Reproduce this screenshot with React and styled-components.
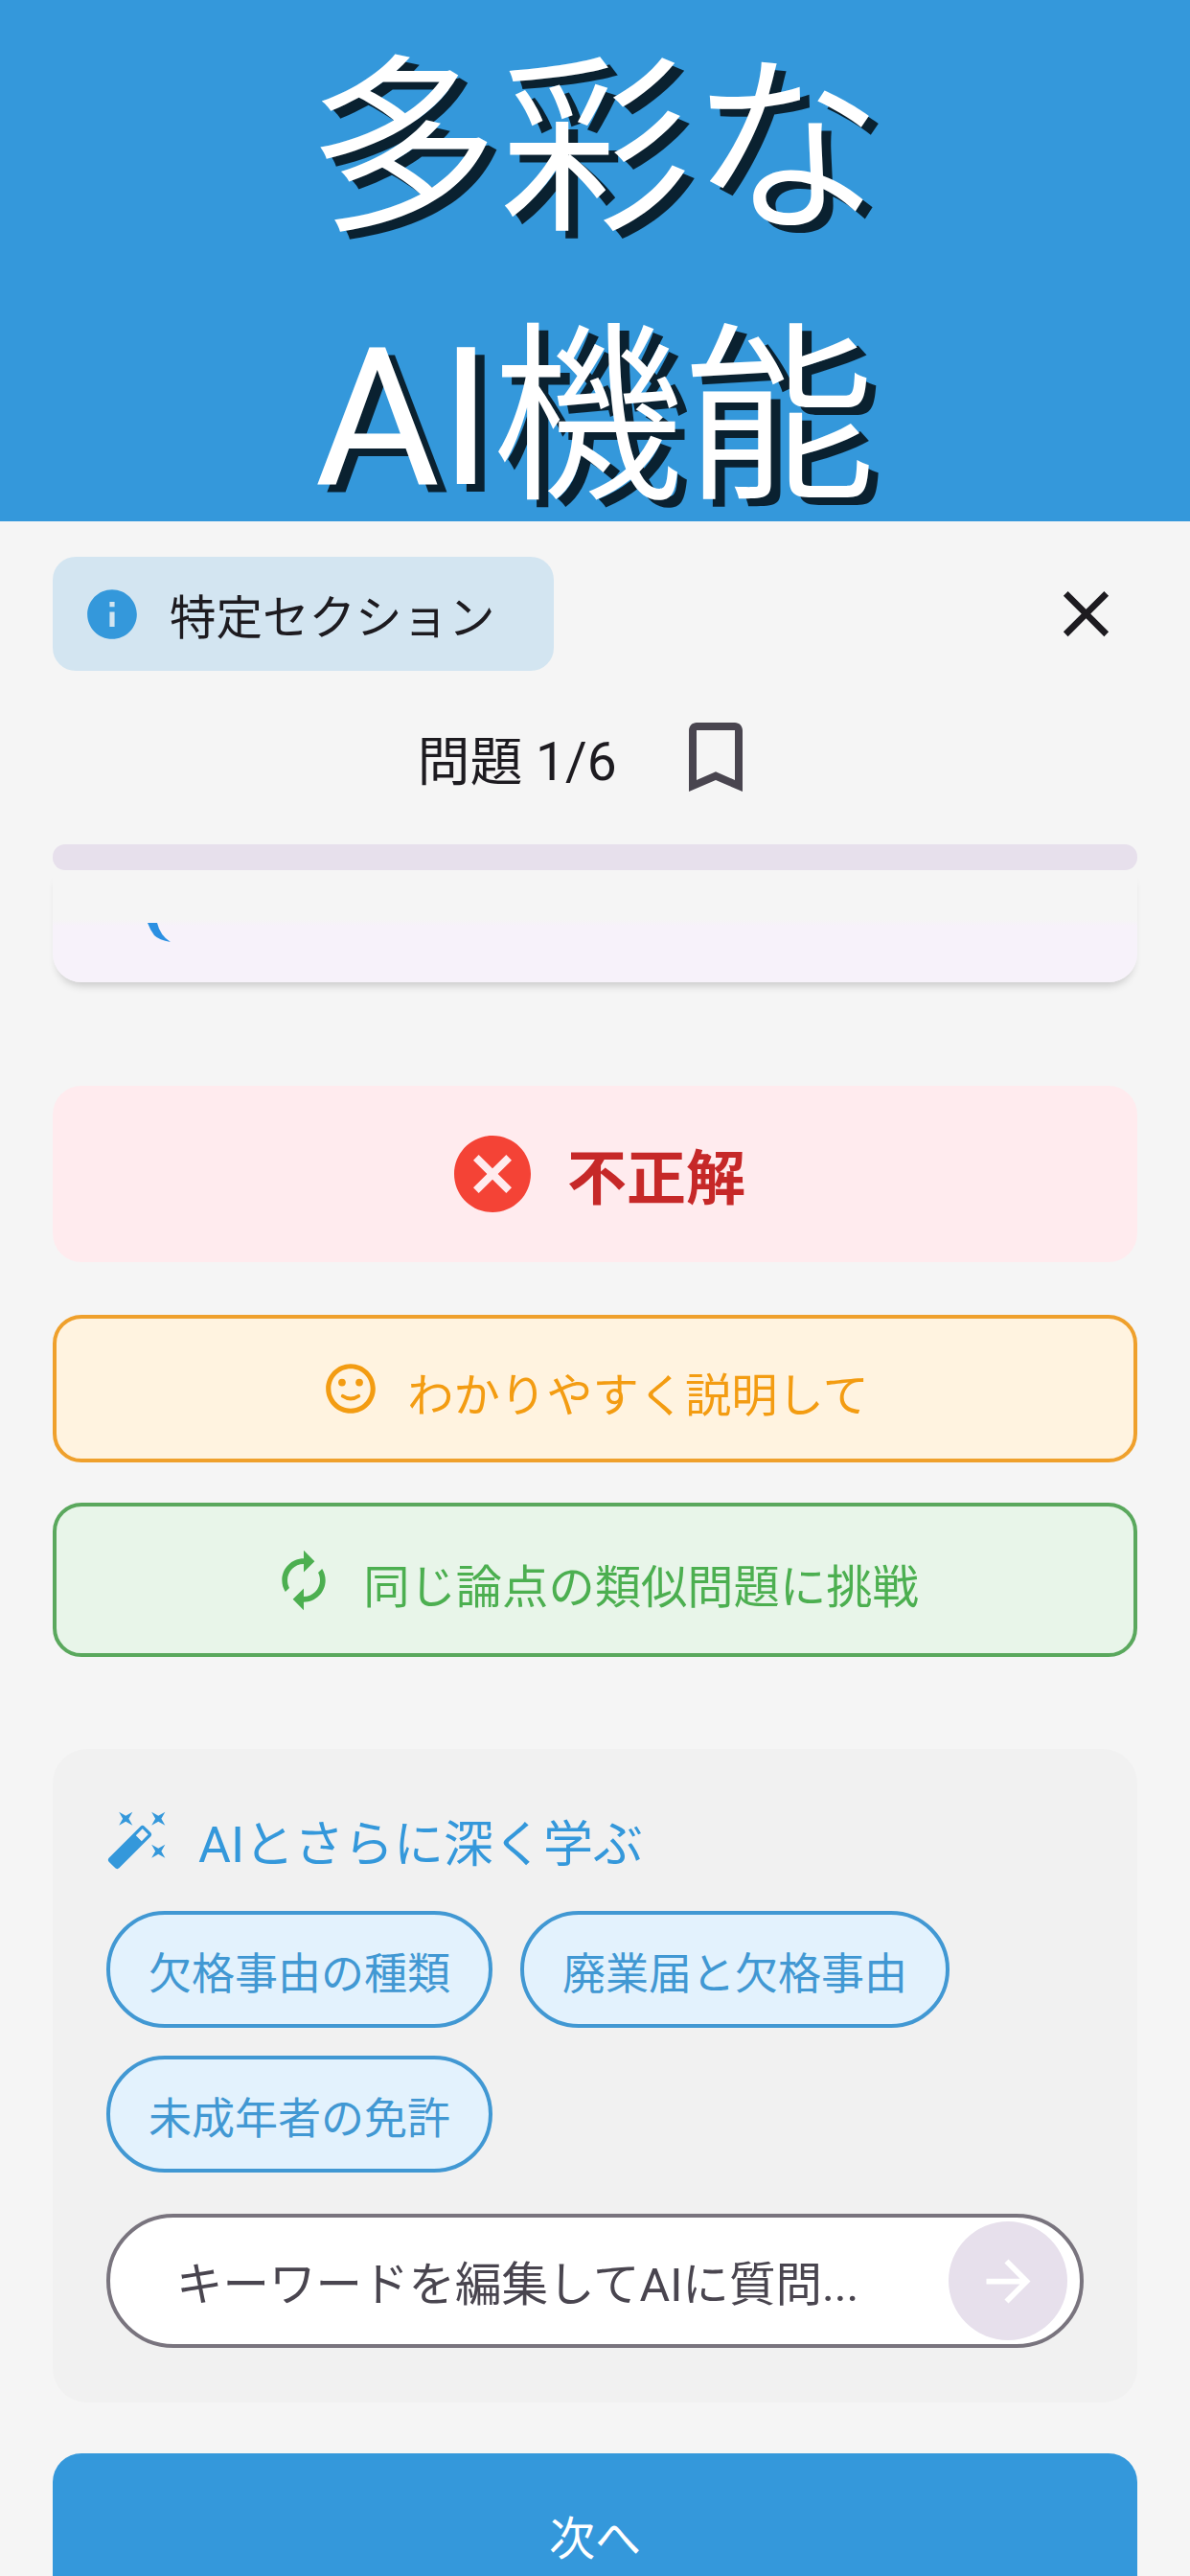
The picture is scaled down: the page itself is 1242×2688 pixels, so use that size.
import React from "react";
import styled, { createGlobalStyle } from "styled-components";

const GlobalStyle = createGlobalStyle`
  html, body {
    margin: 0;
    padding: 0;
    height: 2688px;
    overflow: hidden;
    background: #f5f5f5;
    font-family: Roboto, "Noto Sans CJK JP", sans-serif;
  }
`;

const Page = styled.div`
  width: 1242px;
  height: 2688px;
  overflow: hidden;
  background: #f5f5f5;
`;

const Hero = styled.header`
  display: flex;
  flex-direction: column;
  gap: 80px;
  height: 544px;
  box-sizing: border-box;
  padding-top: 57px;
  background: #3498db;
  color: #fff;
  font-size: 200px;
  font-weight: 350;
  line-height: 200px;
  text-align: center;
  text-shadow: 10px 8px 0 #0a2130;
`;

const HeroLatin = styled.span`
  font-weight: 400;
`;

const Content = styled.main`
  padding: 37px 55px 0;
`;

const TopRow = styled.div`
  display: flex;
  align-items: center;
  justify-content: space-between;
`;

const SectionChip = styled.div`
  display: flex;
  align-items: center;
  gap: 29px;
  width: 523px;
  height: 119px;
  box-sizing: border-box;
  padding-left: 31px;
  border-radius: 24px;
  background: #d3e5f1;
  color: #1d1b20;
  font-size: 48.5px;
`;

const CloseIcon = styled.svg`
  width: 81px;
  height: 81px;
  margin-right: 13px;
  fill: #1d1b20;
`;

const QuestionRow = styled.div`
  display: flex;
  align-items: center;
  justify-content: center;
  gap: 55px;
  height: 96px;
  margin-top: 42px;
  padding-right: 12px;
  color: #1d1b20;
  font-size: 55px;
`;

const BookmarkIcon = styled.svg`
  width: 96px;
  height: 96px;
  fill: #49454f;
`;

const ProgressTrack = styled.div`
  height: 27px;
  margin-top: 43px;
  border-radius: 13px;
  background: #e7e0ec;
`;

const LoadingCard = styled.div`
  height: 117px;
  box-sizing: border-box;
  padding: 55px 0 0 98px;
  border-radius: 0 0 30px 30px;
  background: linear-gradient(#f5f5f5 0, #f5f5f5 52px, #f7f2fa 58px);
  box-shadow: 0 8px 10px -5px rgba(0, 0, 0, 0.2);
`;

const SpinnerArc = styled.svg`
  display: block;
  width: 26px;
  height: 21px;
  fill: #2b90e2;
`;

const ResultBox = styled.div`
  display: flex;
  align-items: center;
  justify-content: center;
  gap: 30px;
  height: 184px;
  margin-top: 108px;
  padding-left: 2px;
  border-radius: 30px;
  background: #ffebee;
  color: #c62828;
  font-size: 62px;
  font-weight: 700;
`;

const ResultIcon = styled.svg`
  width: 96px;
  height: 96px;
  fill: #f44336;
`;

const ActionButton = styled.div`
  display: flex;
  align-items: center;
  justify-content: center;
  gap: 28px;
  height: ${(p) => p.$height}px;
  box-sizing: border-box;
  margin-top: ${(p) => p.$top}px;
  border: 4px solid ${(p) => p.$border};
  border-radius: 30px;
  background: ${(p) => p.$bg};
  color: ${(p) => p.$color};
  font-size: 48.3px;

  svg {
    flex: none;
    width: ${(p) => p.$icon}px;
    height: ${(p) => p.$icon}px;
    fill: ${(p) => p.$color};
  }
`;

const ButtonLabel = styled.span`
  padding-top: 6px;
`;

const AiPanel = styled.section`
  height: 682px;
  box-sizing: border-box;
  margin-top: 96px;
  padding: 60px 56px 0;
  border-radius: 36px;
  background: #f1f1f1;
`;

const PanelTitle = styled.div`
  display: flex;
  align-items: center;
  gap: 29px;
  height: 71px;
  color: #3498db;
  font-size: 52px;

  svg {
    width: 68px;
    height: 68px;
    margin-left: -1px;
    margin-top: -4px;
    fill: #3498db;
  }
`;

const ChipList = styled.div`
  display: flex;
  flex-wrap: wrap;
  gap: 29px;
  margin-top: 38px;
`;

const KeywordChip = styled.div`
  display: flex;
  align-items: center;
  height: 122px;
  box-sizing: border-box;
  padding: 2px 40px 0;
  border: 4px solid #4198d3;
  border-radius: 61px;
  background: #e3f2fd;
  color: #4198d3;
  font-size: 45px;
`;

const AskField = styled.div`
  display: flex;
  align-items: center;
  justify-content: space-between;
  height: 140px;
  box-sizing: border-box;
  margin-top: 43px;
  padding: 0 13px 0 69px;
  border: 4px solid #79747e;
  border-radius: 70px;
  background: #fff;
  color: #49454f;
  font-size: 48.5px;
`;

const SendButton = styled.div`
  display: flex;
  align-items: center;
  justify-content: center;
  width: 124px;
  height: 124px;
  border-radius: 50%;
  background: #e7e0ec;

  svg {
    width: 69px;
    height: 69px;
    fill: #fff;
  }
`;

const NextButton = styled.div`
  display: flex;
  align-items: center;
  justify-content: center;
  height: 170px;
  margin-top: 53px;
  border-radius: 30px;
  background: #3498db;
  color: #fff;
  font-size: 48px;
`;

const keywords = ["欠格事由の種類", "廃業届と欠格事由", "未成年者の免許"];

export default function App() {
  return (
    <Page>
      <GlobalStyle />
      <Hero>
        <div>多彩な</div>
        <div>
          <HeroLatin>AI</HeroLatin>機能
        </div>
      </Hero>
      <Content>
        <TopRow>
          <SectionChip>
            <svg width="62" height="62" viewBox="0 0 24 24" fill="#3498db">
              <path d="M12 2C6.48 2 2 6.48 2 12s4.48 10 10 10 10-4.48 10-10S17.52 2 12 2zm1 15h-2v-6h2v6zm0-8h-2V7h2v2z" />
            </svg>
            特定セクション
          </SectionChip>
          <CloseIcon viewBox="0 0 24 24">
            <path d="M19 6.41L17.59 5 12 10.59 6.41 5 5 6.41 10.59 12 5 17.59 6.41 19 12 13.41 17.59 19 19 17.59 13.41 12z" />
          </CloseIcon>
        </TopRow>

        <QuestionRow>
          問題 1/6
          <BookmarkIcon viewBox="0 0 24 24">
            <path d="M17 3H7c-1.1 0-1.99.9-1.99 2L5 21l7-3 7 3V5c0-1.1-.9-2-2-2zm0 15l-5-2.18L7 18V5h10v13z" />
          </BookmarkIcon>
        </QuestionRow>

        <ProgressTrack />
        <LoadingCard>
          <SpinnerArc viewBox="0 0 26 21">
            <path d="M1 0L11 0Q14 13 25 20Q13 18 8 13Q4 8 1 0Z" />
          </SpinnerArc>
        </LoadingCard>

        <ResultBox>
          <ResultIcon viewBox="0 0 24 24">
            <path d="M12 2C6.47 2 2 6.47 2 12s4.47 10 10 10 10-4.47 10-10S17.53 2 12 2zm5 13.59L15.59 17 12 13.41 8.41 17 7 15.59 10.59 12 7 8.41 8.41 7 12 10.59 15.59 7 17 8.41 13.41 12 17 15.59z" />
          </ResultIcon>
          不正解
        </ResultBox>

        <ActionButton $top={55} $height={154} $icon={62} $bg="#fff3e0" $border="#efa02c" $color="#f39c12">
          <svg viewBox="0 0 24 24">
            <circle cx="15.5" cy="9.5" r="1.5" />
            <circle cx="8.5" cy="9.5" r="1.5" />
            <path d="M11.99 2C6.47 2 2 6.48 2 12s4.47 10 9.99 10C17.52 22 22 17.52 22 12S17.52 2 11.99 2zM12 20c-4.42 0-8-3.58-8-8s3.58-8 8-8 8 3.58 8 8-3.58 8-8 8z" />
            <path d="M8.8 15Q12 17.2 15.2 15" fill="none" stroke="#f39c12" strokeWidth="1.5" strokeLinecap="round" />
          </svg>
          <ButtonLabel>わかりやすく説明して</ButtonLabel>
        </ActionButton>

        <ActionButton $top={42} $height={161} $icon={68} $bg="#e8f5e9" $border="#5aa85d" $color="#4caf50">
          <svg viewBox="0 0 24 24">
            <path d="M12 6v3l4-4-4-4v3c-4.42 0-8 3.58-8 8 0 1.57.46 3.03 1.24 4.26L6.7 14.8c-.45-.83-.7-1.79-.7-2.8 0-3.31 2.69-6 6-6zm6.76 1.74L17.3 9.2c.44.84.7 1.79.7 2.8 0 3.31-2.69 6-6 6v-3l-4 4 4 4v-3c4.42 0 8-3.58 8-8 0-1.57-.46-3.03-1.24-4.26z" />
          </svg>
          <ButtonLabel>同じ論点の類似問題に挑戦</ButtonLabel>
        </ActionButton>

        <AiPanel>
          <PanelTitle>
            <svg viewBox="0 0 24 24">
              <path d="M7.5 5.6L10 7 8.6 4.5 10 2 7.5 3.4 5 2l1.4 2.5L5 7zm12 9.8L17 14l1.4 2.5L17 19l2.5-1.4L22 19l-1.4-2.5L22 14zM22 2l-2.5 1.4L17 2l1.4 2.5L17 7l2.5-1.4L22 7l-1.4-2.5zm-7.63 5.29c-.39-.39-1.02-.39-1.41 0L1.29 18.96c-.39.39-.39 1.02 0 1.41l2.34 2.34c.39.39 1.02.39 1.41 0L16.7 11.05c.39-.39.39-1.02 0-1.41l-2.33-2.35zm-1.03 5.49l-2.12-2.12 2.44-2.44 2.12 2.12-2.44 2.44z" />
            </svg>
            AIとさらに深く学ぶ
          </PanelTitle>
          <ChipList>
            {keywords.map((word) => (
              <KeywordChip key={word}>{word}</KeywordChip>
            ))}
          </ChipList>
          <AskField>
            キーワードを編集してAIに質問...
            <SendButton>
              <svg viewBox="0 0 24 24">
                <path d="M12 4l-1.41 1.41L16.17 11H4v2h12.17l-5.58 5.59L12 20l8-8z" />
              </svg>
            </SendButton>
          </AskField>
        </AiPanel>

        <NextButton>次へ</NextButton>
      </Content>
    </Page>
  );
}
